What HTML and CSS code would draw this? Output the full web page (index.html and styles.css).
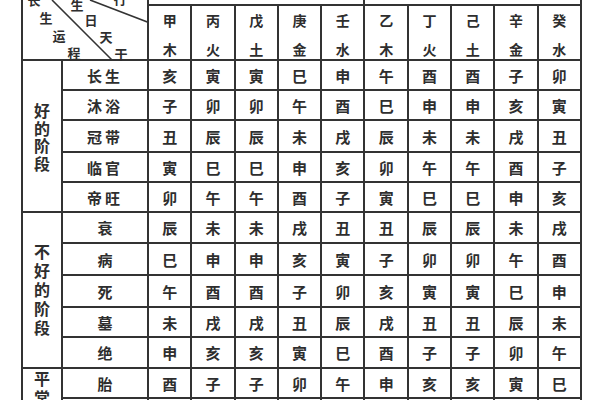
FILE: index.html
```html
<!DOCTYPE html>
<html lang="zh">
<head>
<meta charset="utf-8">
<title>十二长生表</title>
<link rel="stylesheet" href="styles.css">
</head>
<body>
<div class="table">
  <div class="cell corner">
    <svg class="diag" width="126" height="61" viewBox="0 0 126 61">
      <line x1="29" y1="0" x2="89" y2="60" />
      <line x1="67" y1="0" x2="127" y2="23" />
    </svg>
    <span class="ch c-xing">行</span>
    <span class="ch c-chang">长</span>
    <span class="ch c-sheng1">生</span>
    <span class="ch c-yun">运</span>
    <span class="ch c-cheng">程</span>
    <span class="ch c-sheng2">生</span>
    <span class="ch c-ri">日</span>
    <span class="ch c-tian">天</span>
    <span class="ch c-gan">干</span>
  </div>
  <div class="cell strip strip-a"></div>
  <div class="cell strip strip-b"></div>

  <div class="cell head"><span>甲</span><span>木</span></div>
  <div class="cell head"><span>丙</span><span>火</span></div>
  <div class="cell head"><span>戊</span><span>土</span></div>
  <div class="cell head"><span>庚</span><span>金</span></div>
  <div class="cell head"><span>壬</span><span>水</span></div>
  <div class="cell head"><span>乙</span><span>木</span></div>
  <div class="cell head"><span>丁</span><span>火</span></div>
  <div class="cell head"><span>己</span><span>土</span></div>
  <div class="cell head"><span>辛</span><span>金</span></div>
  <div class="cell head"><span>癸</span><span>水</span></div>

  <div class="cell group group-good"><span class="vt">好的阶段</span></div>
  <div class="cell group group-bad"><span class="vt">不好的阶段</span></div>
  <div class="cell group group-plain"><span class="vt">平常的阶段</span></div>

  <div class="cell name pair">长生</div>
  <div class="cell">亥</div><div class="cell">寅</div><div class="cell">寅</div><div class="cell">巳</div><div class="cell">申</div>
  <div class="cell">午</div><div class="cell">酉</div><div class="cell">酉</div><div class="cell">子</div><div class="cell">卯</div>

  <div class="cell name pair">沐浴</div>
  <div class="cell">子</div><div class="cell">卯</div><div class="cell">卯</div><div class="cell">午</div><div class="cell">酉</div>
  <div class="cell">巳</div><div class="cell">申</div><div class="cell">申</div><div class="cell">亥</div><div class="cell">寅</div>

  <div class="cell name pair">冠带</div>
  <div class="cell">丑</div><div class="cell">辰</div><div class="cell">辰</div><div class="cell">未</div><div class="cell">戌</div>
  <div class="cell">辰</div><div class="cell">未</div><div class="cell">未</div><div class="cell">戌</div><div class="cell">丑</div>

  <div class="cell name pair">临官</div>
  <div class="cell">寅</div><div class="cell">巳</div><div class="cell">巳</div><div class="cell">申</div><div class="cell">亥</div>
  <div class="cell">卯</div><div class="cell">午</div><div class="cell">午</div><div class="cell">酉</div><div class="cell">子</div>

  <div class="cell name pair">帝旺</div>
  <div class="cell">卯</div><div class="cell">午</div><div class="cell">午</div><div class="cell">酉</div><div class="cell">子</div>
  <div class="cell">寅</div><div class="cell">巳</div><div class="cell">巳</div><div class="cell">申</div><div class="cell">亥</div>

  <div class="cell name">衰</div>
  <div class="cell">辰</div><div class="cell">未</div><div class="cell">未</div><div class="cell">戌</div><div class="cell">丑</div>
  <div class="cell">丑</div><div class="cell">辰</div><div class="cell">辰</div><div class="cell">未</div><div class="cell">戌</div>

  <div class="cell name">病</div>
  <div class="cell">巳</div><div class="cell">申</div><div class="cell">申</div><div class="cell">亥</div><div class="cell">寅</div>
  <div class="cell">子</div><div class="cell">卯</div><div class="cell">卯</div><div class="cell">午</div><div class="cell">酉</div>

  <div class="cell name">死</div>
  <div class="cell">午</div><div class="cell">酉</div><div class="cell">酉</div><div class="cell">子</div><div class="cell">卯</div>
  <div class="cell">亥</div><div class="cell">寅</div><div class="cell">寅</div><div class="cell">巳</div><div class="cell">申</div>

  <div class="cell name">墓</div>
  <div class="cell">未</div><div class="cell">戌</div><div class="cell">戌</div><div class="cell">丑</div><div class="cell">辰</div>
  <div class="cell">戌</div><div class="cell">丑</div><div class="cell">丑</div><div class="cell">辰</div><div class="cell">未</div>

  <div class="cell name">绝</div>
  <div class="cell">申</div><div class="cell">亥</div><div class="cell">亥</div><div class="cell">寅</div><div class="cell">巳</div>
  <div class="cell">酉</div><div class="cell">子</div><div class="cell">子</div><div class="cell">卯</div><div class="cell">午</div>

  <div class="cell name">胎</div>
  <div class="cell">酉</div><div class="cell">子</div><div class="cell">子</div><div class="cell">卯</div><div class="cell">午</div>
  <div class="cell">申</div><div class="cell">亥</div><div class="cell">亥</div><div class="cell">寅</div><div class="cell">巳</div>

  <div class="cell name">养</div>
  <div class="cell">戌</div><div class="cell">丑</div><div class="cell">丑</div><div class="cell">辰</div><div class="cell">未</div>
  <div class="cell">未</div><div class="cell">戌</div><div class="cell">戌</div><div class="cell">丑</div><div class="cell">辰</div>
</div>
</body>
</html>
```

FILE: styles.css
```css
* { box-sizing: border-box; }

html, body {
  margin: 0;
  padding: 0;
  background: #ffffff;
  overflow: hidden;
  height: 400px;
}

.table {
  display: grid;
  width: max-content;
  margin-left: 21px;
  border-left: 2px solid #333333;
  grid-template-columns: 40px 86px repeat(10, 43.3px);
  grid-template-rows: 6px 55px 30px 30px 32px 30px 30px 31px 32px 32px 30px 31px 30px 30px;
  font-family: "Noto Sans CJK SC", "Noto Sans CJK TC", sans-serif;
  font-weight: 700;
  color: #2e2e2e;
}

.cell {
  border-right: 2px solid #333333;
  border-bottom: 2px solid #333333;
  display: flex;
  align-items: center;
  justify-content: center;
  font-size: 15px;
  line-height: 15px;
}

.corner {
  grid-column: 1 / 3;
  grid-row: 1 / 3;
  position: relative;
  display: block;
  font-size: 13px;
  line-height: 14px;
}

.diag {
  position: absolute;
  left: 0;
  top: 0;
}

.diag line {
  stroke: #333333;
  stroke-width: 1.6;
}

.ch {
  position: absolute;
  width: 14px;
  height: 14px;
  text-align: center;
}

.c-xing   { left: 90px; top: -8px; }
.c-chang  { left: 4px;  top: -7px; }
.c-sheng1 { left: 16px; top: 11px; }
.c-yun    { left: 29px; top: 29px; }
.c-cheng  { left: 44px; top: 46px; }
.c-sheng2 { left: 47px; top: -2px; }
.c-ri     { left: 61px; top: 13px; }
.c-tian   { left: 76px; top: 30px; }
.c-gan    { left: 91px; top: 47px; }

.strip-a { grid-column: 3 / 8; grid-row: 1; }
.strip-b { grid-column: 8 / 13; grid-row: 1; }

.head {
  flex-direction: column;
  justify-content: flex-start;
  padding-top: 7px;
  gap: 15px;
  font-size: 14px;
  line-height: 14px;
}

.group {
  grid-column: 1;
  flex-direction: column;
  font-size: 16px;
}

.vt {
  writing-mode: vertical-rl;
  text-orientation: upright;
  line-height: 16px;
  white-space: nowrap;
  flex-shrink: 0;
}

.group-good {
  grid-row: 3 / 8;
  padding-top: 4px;
}

.group-good .vt { letter-spacing: 1.5px; }

.group-bad {
  grid-row: 8 / 13;
  padding-top: 3px;
}

.group-bad .vt { letter-spacing: 3px; }

.group-plain {
  grid-row: 13 / 15;
  justify-content: flex-start;
  padding-top: 2px;
}

.group-plain .vt { letter-spacing: 3px; }

.name {
  grid-column: 2;
}

.pair {
  letter-spacing: 3px;
}
```
